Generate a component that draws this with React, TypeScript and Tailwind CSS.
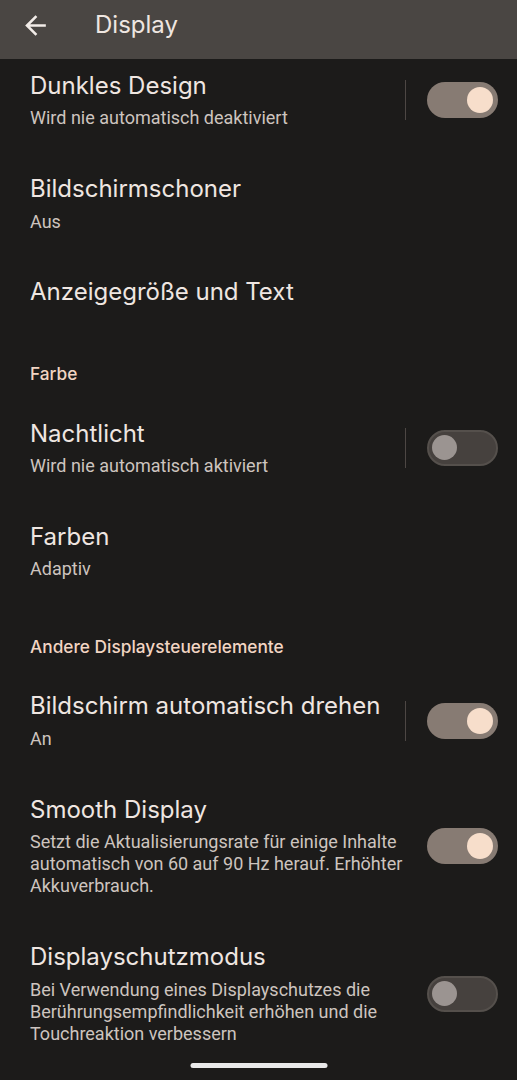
import React from "react";

type RowProps = {
  title: string;
  sub?: string[];
  toggle?: "on" | "off";
  divider?: boolean;
  first?: boolean;
};

function Switch({ on }: { on: boolean }) {
  if (on) {
    return (
      <div className="flex h-[36px] w-[71px] shrink-0 items-center justify-end rounded-full bg-[#877b73] pr-[5px]">
        <div className="h-[26px] w-[26px] rounded-full bg-[#f7decb]" />
      </div>
    );
  }
  return (
    <div className="flex h-[36px] w-[71px] shrink-0 items-center justify-start rounded-full border-2 border-[#55504c] bg-[#46413e] pl-[3px]">
      <div className="h-[25px] w-[25px] rounded-full bg-[#9b9491]" />
    </div>
  );
}

function Row({ title, sub, toggle, divider, first }: RowProps) {
  return (
    <div className={`flex items-center pl-[30px] pr-[19px] ${first ? "-mt-[10.5px]" : ""}`}>
      <div className="flex min-w-0 flex-1 flex-col py-[22.3px]">
        <div className="text-[24px] leading-[30px] text-[#efe6e1] [font-family:Inter,'Noto_Sans',sans-serif]">
          {title}
        </div>
        {sub && (
          <div className="mt-[6.3px] flex flex-col text-[18px] leading-[22.3px] text-[#cdc4bf] [font-family:Roboto,'Noto_Sans',sans-serif]">
            {sub.map((s) => (
              <span key={s} className="block whitespace-nowrap">
                {s}
              </span>
            ))}
          </div>
        )}
      </div>
      {toggle && (
        <div className="flex w-[93px] shrink-0 items-center justify-end">
          {divider && <div className="mr-[21px] h-[40px] w-[1.5px] bg-[#4d4744]" />}
          <Switch on={toggle === "on"} />
        </div>
      )}
    </div>
  );
}

function Section({ label }: { label: string }) {
  return (
    <div className="pl-[30px] pt-[34.4px] pb-[12.1px] text-[17.3px] font-medium leading-[20px] text-[#f2d5c3] [font-family:Inter,'Noto_Sans',sans-serif]">
      {label}
    </div>
  );
}

export default function App() {
  return (
    <div className="relative h-[1080px] w-[517px] overflow-hidden bg-[#1c1b1a]">
      <div className="relative z-10 flex h-[59.3px] items-start bg-[#4a4643] pl-[19.5px] pt-[10px]">
        <div className="flex h-[31px] items-center">
          <svg width="31" height="31" viewBox="0 0 24 24" fill="#f2ece8">
            <path d="M20 11H7.83l5.59-5.59L12 4l-8 8 8 8 1.41-1.41L7.83 13H20v-2z" />
          </svg>
          <span className="ml-[44.5px] -mt-[1px] text-[24px] leading-[30px] text-[#efe6e1] [font-family:Inter,'Noto_Sans',sans-serif]">
            Display
          </span>
        </div>
      </div>

      <div className="flex flex-col">
        <Row first title="Dunkles Design" sub={["Wird nie automatisch deaktiviert"]} toggle="on" divider />
        <Row title="Bildschirmschoner" sub={["Aus"]} />
        <Row title="Anzeigegröße und Text" />
        <Section label="Farbe" />
        <Row title="Nachtlicht" sub={["Wird nie automatisch aktiviert"]} toggle="off" divider />
        <Row title="Farben" sub={["Adaptiv"]} />
        <Section label="Andere Displaysteuerelemente" />
        <Row title="Bildschirm automatisch drehen" sub={["An"]} toggle="on" divider />
        <Row
          title="Smooth Display"
          sub={[
            "Setzt die Aktualisierungsrate für einige Inhalte",
            "automatisch von 60 auf 90 Hz herauf. Erhöhter",
            "Akkuverbrauch.",
          ]}
          toggle="on"
        />
        <Row
          title="Displayschutzmodus"
          sub={[
            "Bei Verwendung eines Displayschutzes die",
            "Berührungsempfindlichkeit erhöhen und die",
            "Touchreaktion verbessern",
          ]}
          toggle="off"
        />
      </div>

      <div className="absolute bottom-[12.5px] left-1/2 h-[5px] w-[137px] -translate-x-1/2 rounded-full bg-[#e9e9e9]" />
    </div>
  );
}
